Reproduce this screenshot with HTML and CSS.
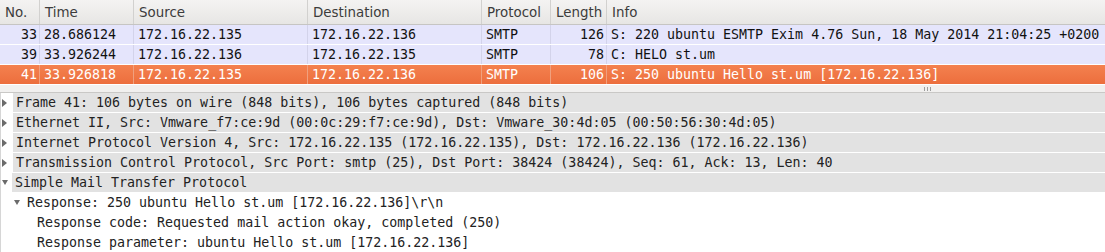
FILE: index.html
```html
<!DOCTYPE html>
<html lang="en">
<head>
    <meta charset="UTF-8">
    <title>Packet capture - SMTP</title>
    <link rel="stylesheet" href="styles.css">
</head>
<body>
<div class="packet-list">
    <div class="row head">
        <span class="cell">No.</span>
        <span class="cell">Time</span>
        <span class="cell">Source</span>
        <span class="cell">Destination</span>
        <span class="cell">Protocol</span>
        <span class="cell">Length</span>
        <span class="cell">Info</span>
    </div>
    <div class="row pkt">
        <span class="cell num">33</span>
        <span class="cell">28.686124</span>
        <span class="cell">172.16.22.135</span>
        <span class="cell">172.16.22.136</span>
        <span class="cell">SMTP</span>
        <span class="cell num">126</span>
        <span class="cell">S: 220 ubuntu ESMTP Exim 4.76 Sun, 18 May 2014 21:04:25 +0200</span>
    </div>
    <div class="row pkt">
        <span class="cell num">39</span>
        <span class="cell">33.926244</span>
        <span class="cell">172.16.22.136</span>
        <span class="cell">172.16.22.135</span>
        <span class="cell">SMTP</span>
        <span class="cell num">78</span>
        <span class="cell">C: HELO st.um</span>
    </div>
    <div class="row pkt selected">
        <span class="cell num">41</span>
        <span class="cell">33.926818</span>
        <span class="cell">172.16.22.135</span>
        <span class="cell">172.16.22.136</span>
        <span class="cell">SMTP</span>
        <span class="cell num">106</span>
        <span class="cell">S: 250 ubuntu Hello st.um [172.16.22.136]</span>
    </div>
</div>
<div class="splitter"><span class="grip"></span></div>
<ul class="tree">
    <li class="node top"><span class="arrow closed"></span><span class="label">Frame 41: 106 bytes on wire (848 bits), 106 bytes captured (848 bits)</span></li>
    <li class="node top"><span class="arrow closed"></span><span class="label">Ethernet II, Src: Vmware_f7:ce:9d (00:0c:29:f7:ce:9d), Dst: Vmware_30:4d:05 (00:50:56:30:4d:05)</span></li>
    <li class="node top"><span class="arrow closed"></span><span class="label">Internet Protocol Version 4, Src: 172.16.22.135 (172.16.22.135), Dst: 172.16.22.136 (172.16.22.136)</span></li>
    <li class="node top"><span class="arrow closed"></span><span class="label">Transmission Control Protocol, Src Port: smtp (25), Dst Port: 38424 (38424), Seq: 61, Ack: 13, Len: 40</span></li>
    <li class="node top"><span class="arrow open"></span><span class="label">Simple Mail Transfer Protocol</span></li>
    <li class="node level2"><span class="arrow open"></span><span class="label">Response: 250 ubuntu Hello st.um [172.16.22.136]\r\n</span></li>
    <li class="node level3"><span class="label">Response code: Requested mail action okay, completed (250)</span></li>
    <li class="node level3"><span class="label">Response parameter: ubuntu Hello st.um [172.16.22.136]</span></li>
</ul>
</body>
</html>
```

FILE: styles.css
```css
html, body {
    margin: 0;
    padding: 0;
    background-color: #fff;
    width: 1105px;
    height: 252px;
    overflow: hidden;
}

.row {
    display: grid;
    grid-template-columns: 40px 94px 174px 174px 69px 56px 1fr;
}

.cell {
    padding: 0 4px;
    border-right: 1px solid transparent;
    white-space: nowrap;
    overflow: hidden;
}

.cell:last-child {
    border-right: none;
}

.num {
    text-align: right;
    padding-right: 2px;
}

.head {
    height: 24px;
    line-height: 25px;
    border-bottom: 1px solid #c6c5c3;
    background: linear-gradient(#f4f3f2, #e7e6e4);
    font-family: "DejaVu Sans", sans-serif;
    font-size: 13.4px;
    color: #3c3c3c;
}

.head .cell {
    padding-left: 5px;
    border-right-color: #d2d1cf;
}

.pkt {
    height: 19px;
    line-height: 19px;
    border-bottom: 1px solid #fff;
    background-color: #e5e5fc;
    font-family: "DejaVu Sans Mono", monospace;
    font-size: 13.3px;
    color: #111;
}

.pkt .cell {
    border-right-color: #d3d3ea;
}

.pkt.selected {
    background: linear-gradient(#f4814f, #ec6e3d);
    color: #fff;
}

.pkt.selected .cell {
    border-right-color: #f0a07e;
}

.splitter {
    height: 7px;
    background-color: #f1f0ef;
    border-bottom: 1px solid #c9c8c6;
    position: relative;
}

.grip {
    position: absolute;
    left: 924px;
    top: 2px;
    width: 7px;
    height: 4px;
    background: repeating-linear-gradient(90deg, #9d9d9d 0 1px, transparent 1px 3px);
}

.tree {
    list-style: none;
    margin: 0;
    padding: 0;
    border-left: 1px solid #d6d6d6;
    font-family: "DejaVu Sans Mono", monospace;
    font-size: 13.3px;
    color: #222;
}

.node {
    display: flex;
    align-items: center;
    height: 19px;
    margin-bottom: 1px;
    white-space: nowrap;
}

.node .label {
    flex: 1;
    height: 19px;
    line-height: 19px;
}

.top {
    padding-left: 1px;
}

.top .label {
    margin-left: 5px;
    padding-left: 3px;
    background-color: #e2e2e2;
}

.top .arrow.open {
    margin-right: -1px;
}

.level2 {
    padding-left: 13px;
}

.level2 .label {
    margin-left: 7px;
}

.level3 .label {
    padding-left: 36px;
}

.arrow {
    width: 0;
    height: 0;
}

.arrow.closed {
    border-left: 5px solid #6b6b6b;
    border-top: 4px solid transparent;
    border-bottom: 4px solid transparent;
    margin-right: 1px;
}

.arrow.open {
    border-top: 5px solid #6b6b6b;
    border-left: 3px solid transparent;
    border-right: 3px solid transparent;
}
```
